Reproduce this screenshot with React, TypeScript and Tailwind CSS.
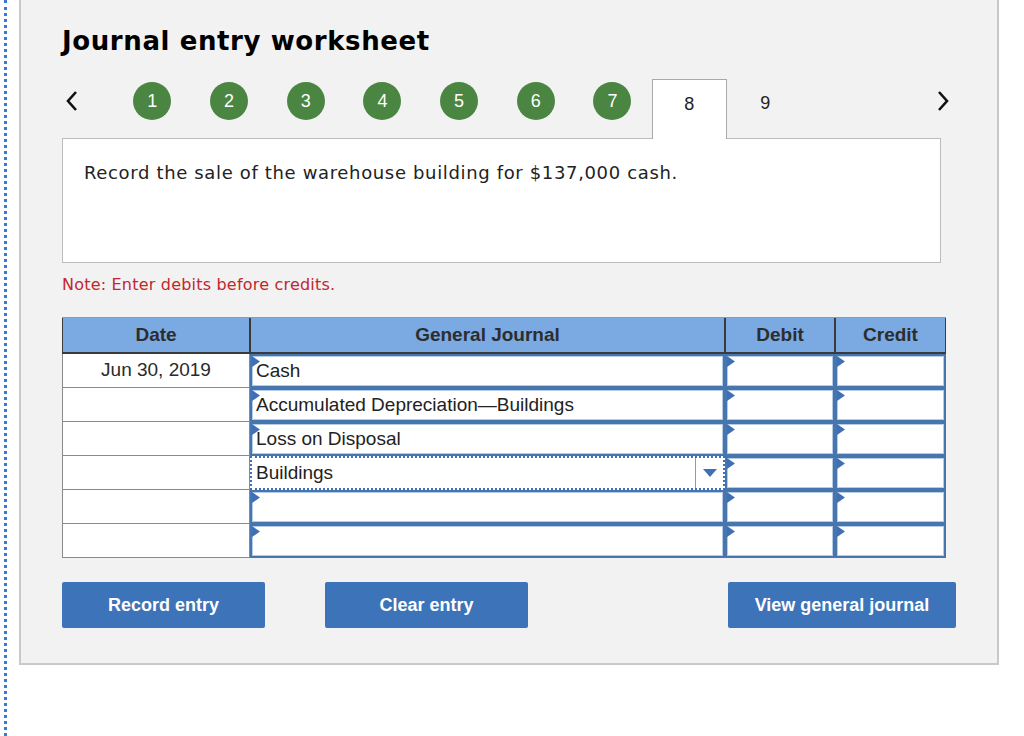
import { ReactNode } from 'react'

const verdana = { fontFamily: '"DejaVu Sans", Verdana, sans-serif' }
const arial = { fontFamily: '"Liberation Sans", Arial, sans-serif' }

const rows = [
  { date: 'Jun 30, 2019', account: 'Cash' },
  { date: '', account: 'Accumulated Depreciation\u2014Buildings' },
  { date: '', account: 'Loss on Disposal' },
  { date: '', account: 'Buildings', focused: true },
  { date: '', account: '' },
  { date: '', account: '' },
]

function Marker() {
  return (
    <svg className="absolute left-0 top-0" width="8" height="11" viewBox="0 0 8 11">
      <path d="M0 0 L8 5.5 L0 11 Z" fill="#3f70b6" />
    </svg>
  )
}

function InputCell({ children }: { children?: ReactNode }) {
  return (
    <div className="relative h-[34px] bg-white border-2 border-[#4775ad] shadow-[inset_0_0_0_1px_#b6cbe7] flex items-center pl-[4px] text-[19px] text-[#222]">
      <Marker />
      {children}
    </div>
  )
}

function Chevron({ dir }: { dir: 'left' | 'right' }) {
  return (
    <svg width="14" height="22" viewBox="0 0 14 22">
      <path
        d={dir === 'left' ? 'M11 2 L3 11 L11 20' : 'M3 2 L11 11 L3 20'}
        fill="none"
        stroke="#111"
        strokeWidth="2.6"
      />
    </svg>
  )
}

export default function App() {
  return (
    <div className="flex w-[1024px] h-[736px] bg-white overflow-hidden" style={arial}>
      {/* left dotted rule */}
      <div className="ml-[4px] w-[15px] h-full border-l-[3px] border-dotted border-[#3b78d6]" />

      {/* worksheet panel */}
      <div className="w-[980px] h-[665px] bg-[#f2f2f2] border-x-2 border-b-2 border-[#c9c9c9] pl-[41px]">
        <div className="w-[894px]">
          <h1 className="pt-[26px] h-[56px] leading-[30px] text-[26px] tracking-[0.6px] font-bold text-black" style={verdana}>
            Journal entry worksheet
          </h1>

          {/* step navigation */}
          <div className="mt-[23px] h-[59px] flex items-start relative z-10">
            <div className="w-[52px] pl-[3px] pt-[11px]">
              <Chevron dir="left" />
            </div>
            {[1, 2, 3, 4, 5, 6, 7].map((n) => (
              <div key={n} className="w-[76.7px] flex justify-center pt-[3px]">
                <div className="w-[38px] h-[38px] rounded-full bg-[#4a8542] flex items-center justify-center text-white text-[18px]">
                  {n}
                </div>
              </div>
            ))}
            <div className="ml-[1px] w-[75px] h-[60px] bg-white border border-b-0 border-[#a9a9a9] flex justify-center pt-[11px] text-[18px] text-[#222]">
              8
            </div>
            <div className="w-[77px] flex justify-center pt-[11px] text-[18px] text-[#222]">9</div>
            <div className="ml-auto mr-[6px] pt-[11px]">
              <Chevron dir="right" />
            </div>
          </div>

          {/* question */}
          <div className="w-[879px] h-[125px] bg-white border border-[#bcbcbc] px-[21px] pt-[20px]">
            <p className="text-[18px] text-[#222] tracking-[0.65px]" style={verdana}>
              Record the sale of the warehouse building for $137,000 cash.
            </p>
          </div>

          <p className="mt-[12px] h-[20px] leading-[20px] text-[16px] tracking-[0.2px] text-[#c1272d]" style={verdana}>
            Note: Enter debits before credits.
          </p>

          {/* journal table */}
          <div className="mt-[22px] w-[884px] grid grid-cols-[188px_475px_110px_111px] border-t border-[#999]">
            {['Date', 'General Journal', 'Debit', 'Credit'].map((h) => (
              <div
                key={h}
                className="h-[36px] bg-[#7aaae1] border-x border-b-2 border-[#3a3a3a] flex items-center justify-center text-[19px] font-bold text-[#2d2d2d]"
              >
                {h}
              </div>
            ))}
            {rows.map((r, i) => (
              <div key={i} className="contents">
                <div className="h-[34px] bg-white border border-t-0 border-[#8a8a8a] flex items-center justify-center text-[19px] text-[#2a2a2a]">
                  {r.date}
                </div>
                {r.focused ? (
                  <div className="relative h-[34px] bg-white border-2 border-dotted border-[#3f70b6] flex items-center text-[19px] text-[#222]">
                    <span className="pl-[4px] flex-1">{r.account}</span>
                    <div className="w-[28px] h-full border-l border-[#9a9a9a] flex items-center justify-center">
                      <svg width="14" height="8" viewBox="0 0 14 8">
                        <path d="M0 0 L14 0 L7 8 Z" fill="#3f70b6" />
                      </svg>
                    </div>
                  </div>
                ) : (
                  <InputCell>{r.account}</InputCell>
                )}
                <InputCell />
                <InputCell />
              </div>
            ))}
          </div>

          {/* actions */}
          <div className="mt-[24px] flex">
            <button className="w-[203px] h-[46px] rounded-[2px] bg-[#3d73b9] text-white text-[18px] font-bold">
              Record entry
            </button>
            <button className="ml-[60px] w-[203px] h-[46px] rounded-[2px] bg-[#3d73b9] text-white text-[18px] font-bold">
              Clear entry
            </button>
            <button className="ml-auto w-[228px] h-[46px] rounded-[2px] bg-[#3d73b9] text-white text-[18px] font-bold">
              View general journal
            </button>
          </div>
        </div>
      </div>
    </div>
  )
}
